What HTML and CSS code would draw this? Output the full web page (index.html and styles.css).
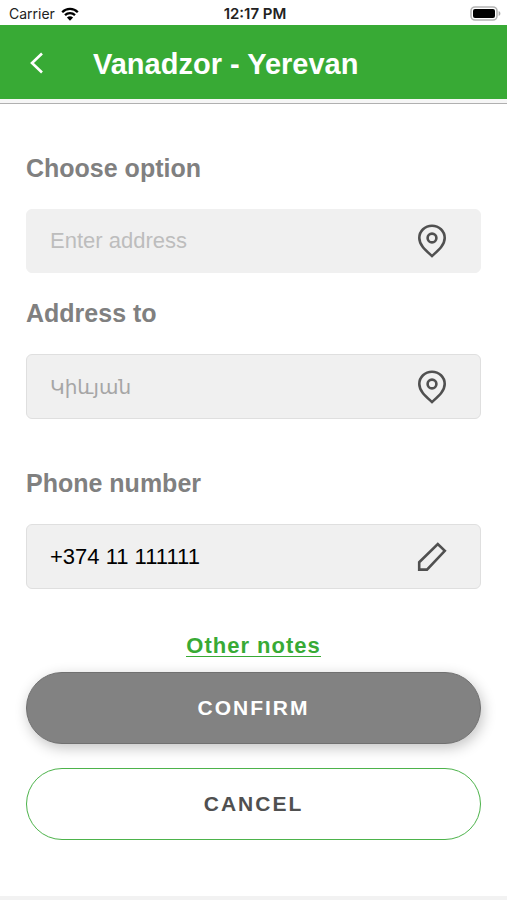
FILE: index.html
```html
<!DOCTYPE html>
<html lang="en">
<head>
<meta charset="utf-8">
<meta name="viewport" content="width=device-width, initial-scale=1">
<title>Vanadzor - Yerevan</title>
<link rel="stylesheet" href="styles.css">
</head>
<body>
<div class="status">
  <div class="carrier">
    <span>Carrier</span>
    <svg width="18" height="14" viewBox="0 0 18 14" aria-hidden="true">
      <path d="M1.2 5.2a11 11 0 0 1 15.6 0M4 8.1a7.2 7.2 0 0 1 10 0" fill="none" stroke="#000" stroke-width="2.3"/>
      <path d="M9 13.8 5.9 10.6a4.6 4.6 0 0 1 6.2 0z"/>
    </svg>
  </div>
  <span class="time">12:17 PM</span>
  <div class="battery">
    <svg width="31" height="15" viewBox="0 0 31 15" aria-hidden="true">
      <rect x="1" y="1" width="26" height="13" rx="4" fill="#fff" stroke="#b4b4b4" stroke-width="1.6"/>
      <rect x="3" y="3" width="22" height="9" rx="2"/>
      <path d="M28.6 5v5c2.4-.8 2.4-4.200 0-5z" fill="#aaa"/>
    </svg>
  </div>
</div>
<header class="header">
  <button class="back" type="button" aria-label="Back">
    <svg width="14" height="22" viewBox="0 0 14 22" aria-hidden="true"><path d="M12 1.500 2 11l10 9.500" fill="none" stroke="#fff" stroke-width="2.600"/></svg>
  </button>
  <h1 class="title">Vanadzor - Yerevan</h1>
</header>
<main>
  <form class="form">
    <label class="label" for="from">Choose option</label>
    <div class="field field-plain">
      <input class="input" id="from" type="text" placeholder="Enter address">
      <svg class="icon" viewBox="0 0 30 34" aria-hidden="true"><path d="M15 32C9.500 27 2.300 21.500 2.300 14a12.700 12.300 0 0 1 25.400 0C27.700 21.500 20.500 27 15 32z"/><circle cx="15" cy="14" r="4.400"/></svg>
    </div>
    <label class="label" for="to">Address to</label>
    <div class="field">
      <input class="input input-to" id="to" type="text" placeholder="Կիևյան" lang="hy">
      <svg class="icon" viewBox="0 0 30 34" aria-hidden="true"><path d="M15 32C9.500 27 2.300 21.500 2.300 14a12.700 12.300 0 0 1 25.400 0C27.700 21.500 20.500 27 15 32z"/><circle cx="15" cy="14" r="4.400"/></svg>
    </div>
    <label class="label label-phone" for="phone">Phone number</label>
    <div class="field">
      <input class="input" id="phone" type="tel" value="+374 11 111111">
      <svg class="icon" viewBox="0 0 30 34" aria-hidden="true"><path d="M2.200 22.300 20.800 4l7 6.800L10 29.600H2.200z"/></svg>
    </div>
    <a class="notes" href="#notes">Other notes</a>
    <button class="button confirm" type="submit">CONFIRM</button>
    <button class="button cancel" type="button">CANCEL</button>
  </form>
</main>
<footer class="footer"></footer>
</body>
</html>
```
FILE: styles.css
```css
* {
  box-sizing: border-box;
}

body {
  margin: 0;
  min-height: 100vh;
  display: flex;
  flex-direction: column;
  background: #fff;
  font-family: "Liberation Sans", Arial, sans-serif;
}

.status {
  display: grid;
  grid-template-columns: 1fr auto 1fr;
  align-items: center;
  padding: 2px 6px 0 9px;
  height: 25px;
  font: 14px/22px Inter, sans-serif;
  color: #222;
}

.carrier {
  display: flex;
  align-items: center;
  gap: 6px;
}

.time {
  font-size: 15px;
  font-weight: 600;
}

.battery {
  display: flex;
  justify-content: flex-end;
}

.header {
  display: flex;
  align-items: center;
  gap: 39px;
  padding: 0 20px;
  height: 79px;
  background: #38aa35;
  border-bottom: 1px solid #b0b0b0;
  box-shadow: inset 0 -4px #f6f6f6;
}

.back {
  display: flex;
  padding: 0 10px 3px;
  border: 0;
  background: none;
}

.title {
  margin: 0;
  font-size: 29px;
  line-height: 36px;
  color: #fff;
}

main {
  flex: 1;
  padding: 49px 26px 24px;
}

.form {
  display: flex;
  flex-direction: column;
}

.label {
  margin-bottom: 26px;
  font-size: 25px;
  font-weight: bold;
  line-height: 30px;
  color: #808080;
}

.field {
  display: flex;
  align-items: center;
  height: 65px;
  margin-bottom: 25px;
  padding: 0 33px 0 23px;
  border: 1px solid #dfdfdf;
  border-radius: 6px;
  background: #f0f0f0;
}

.field-plain {
  height: 64px;
  border-color: #f0f0f0;
}

.label-phone {
  margin-top: 24px;
}

.input {
  flex: 1;
  min-width: 0;
  padding: 0;
  border: 0;
  outline: 0;
  background: none;
  font: 22px/32px "Liberation Sans", Arial, sans-serif;
  color: #000;
}

.input::placeholder {
  color: #bdbdbd;
}

.input-to {
  font-family: "Liberation Sans", "DejaVu Sans", sans-serif;
  font-size: 20px;
}

.input-to::placeholder {
  color: #a6a6a6;
}

.icon {
  width: 30px;
  height: 34px;
  fill: none;
  stroke: #505050;
  stroke-width: 2.6;
}

.notes {
  align-self: center;
  margin: 22px 0 15px;
  border-bottom: 1px solid #38aa35;
  font-size: 22px;
  font-weight: bold;
  line-height: 20px;
  letter-spacing: 1px;
  color: #38aa35;
  text-decoration: none;
}

.button {
  height: 72px;
  border-radius: 36px;
  font: bold 21px/28px "Liberation Sans", Arial, sans-serif;
  letter-spacing: 2px;
}

.confirm {
  margin-bottom: 24px;
  border: 1px solid #707070;
  background: #828282;
  box-shadow: 2px 4px 14px rgba(0, 0, 0, 0.24);
  color: #fff;
}

.cancel {
  border: 1px solid #4db34b;
  background: #fff;
  color: #505050;
}

.footer {
  height: 4px;
  background: #f2f2f2;
}
```
